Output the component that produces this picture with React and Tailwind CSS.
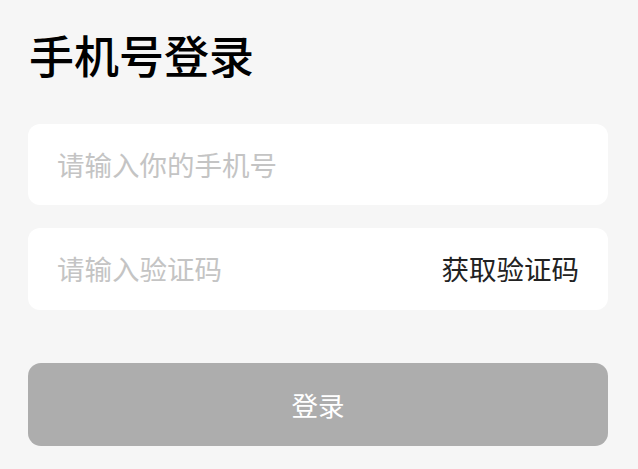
export default function App() {
  return (
    <div
      className="w-[638px] h-[469px] bg-[#f6f6f6] overflow-hidden pl-[28px] pr-[30px]"
      style={{ fontFamily: '"Noto Sans CJK SC", "Noto Sans", sans-serif' }}
    >
      <h1 className="pt-[29px] text-[45px] leading-[52px] font-medium text-[#000] pl-[1px]">手机号登录</h1>
      <div className="mt-[43px] h-[81px] bg-white rounded-[12px] flex items-center px-[29px]">
        <span className="text-[27.5px] text-[#c4c4c4]">请输入你的手机号</span>
      </div>
      <div className="mt-[23px] h-[82px] bg-white rounded-[12px] flex items-center justify-between pl-[29px] pr-[29px]">
        <span className="text-[27.5px] text-[#c4c4c4]">请输入验证码</span>
        <span className="text-[27.5px] text-[#222]">获取验证码</span>
      </div>
      <button className="mt-[53px] w-full h-[83px] bg-[#adadad] rounded-[13px] flex items-center justify-center text-white text-[26.5px]">
        登录
      </button>
    </div>
  );
}
